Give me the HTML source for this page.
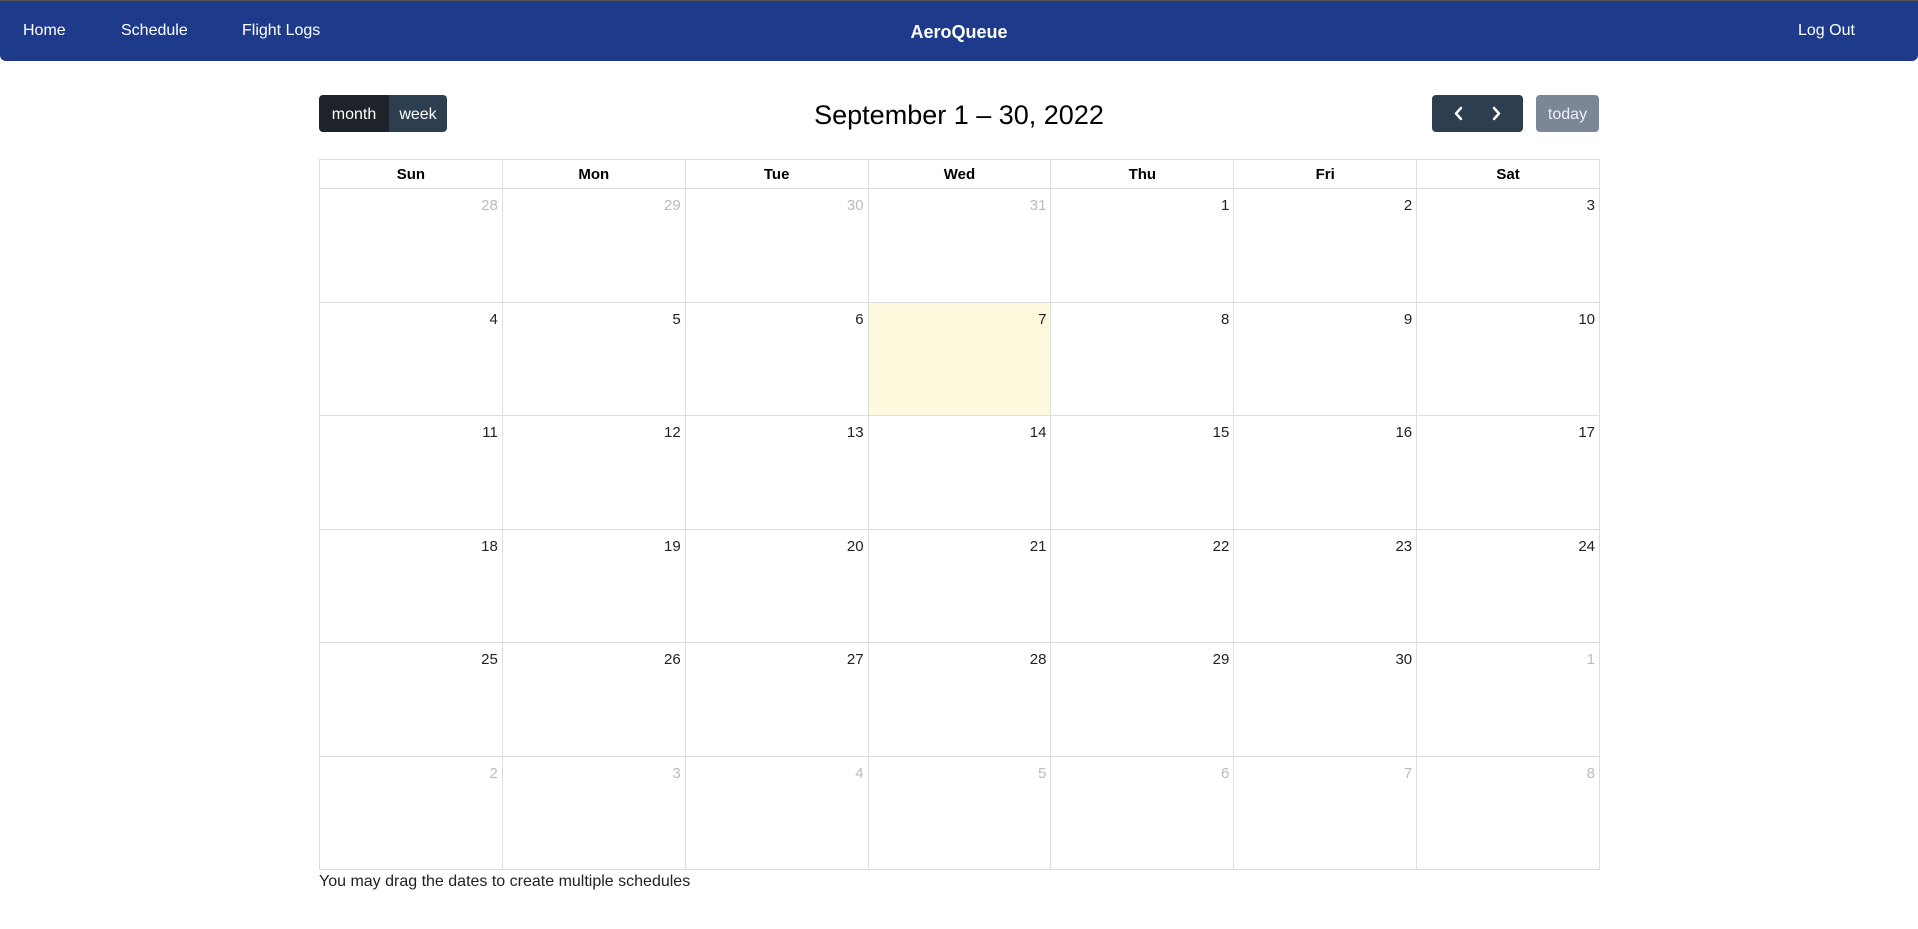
<!DOCTYPE html>
<html><head><meta charset="utf-8"><style>
*{box-sizing:border-box;margin:0;padding:0}
body{width:1918px;height:929px;background:#fff;font-family:"Liberation Sans",sans-serif;color:#000;position:relative;overflow:hidden}
.nav{position:absolute;left:0;top:0;width:1918px;height:61px;background:#1e3a8a;border-top:1px solid #555;border-radius:0 0 6px 6px;color:#fff;font-size:16px}
.nav span{position:absolute;top:21px}
.brand{left:0;width:1918px;text-align:center;font-weight:bold;font-size:18px;top:21px!important}
.btn{position:absolute;top:95px;height:37px;color:#fff;font-size:16px;line-height:39px;text-align:center}
.title{position:absolute;top:96px;left:319px;width:1280px;text-align:center;font-size:27px;line-height:38px}
.cal{position:absolute;left:319px;top:159px;width:1281px;border-left:1px solid #ddd;border-top:1px solid #ddd}
.row{display:flex}
.c{width:182.86px;border-right:1px solid #ddd;border-bottom:1px solid #ddd;text-align:right;padding:8px 4px 0 0;font-size:15px;color:#222}
.h{height:29px;text-align:center;font-weight:bold;padding:6px 0 0;font-size:15px;color:#000}
.d{height:113.5px}
.o{color:#bbb}
.t{background:#fef8dc}
.foot{position:absolute;left:319px;top:873px;font-size:16px;color:#222}
</style></head><body>
<div class="nav">
<span style="left:23px">Home</span><span style="left:121px">Schedule</span><span style="left:242px">Flight Logs</span>
<span class="brand">AeroQueue</span>
<span style="left:1798px">Log Out</span>
</div>
<div class="btn" style="left:319px;width:70px;background:#1e2329;border-radius:4px 0 0 4px">month</div>
<div class="btn" style="left:389px;width:58px;background:#2c3e50;border-radius:0 4px 4px 0">week</div>
<div class="title">September 1 – 30, 2022</div>
<div class="btn" style="left:1432px;width:91px;background:#2c3e50;border-radius:4px">
<svg width="91" height="37" viewBox="0 0 91 37"><path d="M29 13l-5 5.5 5 5.5M62 13l5 5.5-5 5.5" stroke="#fff" stroke-width="2.5" fill="none" stroke-linecap="round" stroke-linejoin="round"/></svg></div>
<div class="btn" style="left:1536px;width:63px;background:#7b8794;border-radius:4px;color:#eef">today</div>
<div class="cal">
<div class="row"><div class="c h">Sun</div><div class="c h">Mon</div><div class="c h">Tue</div><div class="c h">Wed</div><div class="c h">Thu</div><div class="c h">Fri</div><div class="c h">Sat</div></div>
<div class="row"><div class="c d o">28</div><div class="c d o">29</div><div class="c d o">30</div><div class="c d o">31</div><div class="c d">1</div><div class="c d">2</div><div class="c d">3</div></div>
<div class="row"><div class="c d">4</div><div class="c d">5</div><div class="c d">6</div><div class="c d t">7</div><div class="c d">8</div><div class="c d">9</div><div class="c d">10</div></div>
<div class="row"><div class="c d">11</div><div class="c d">12</div><div class="c d">13</div><div class="c d">14</div><div class="c d">15</div><div class="c d">16</div><div class="c d">17</div></div>
<div class="row"><div class="c d">18</div><div class="c d">19</div><div class="c d">20</div><div class="c d">21</div><div class="c d">22</div><div class="c d">23</div><div class="c d">24</div></div>
<div class="row"><div class="c d">25</div><div class="c d">26</div><div class="c d">27</div><div class="c d">28</div><div class="c d">29</div><div class="c d">30</div><div class="c d o">1</div></div>
<div class="row"><div class="c d o">2</div><div class="c d o">3</div><div class="c d o">4</div><div class="c d o">5</div><div class="c d o">6</div><div class="c d o">7</div><div class="c d o">8</div></div>
</div>
<div class="foot">You may drag the dates to create multiple schedules</div>
</body></html>
